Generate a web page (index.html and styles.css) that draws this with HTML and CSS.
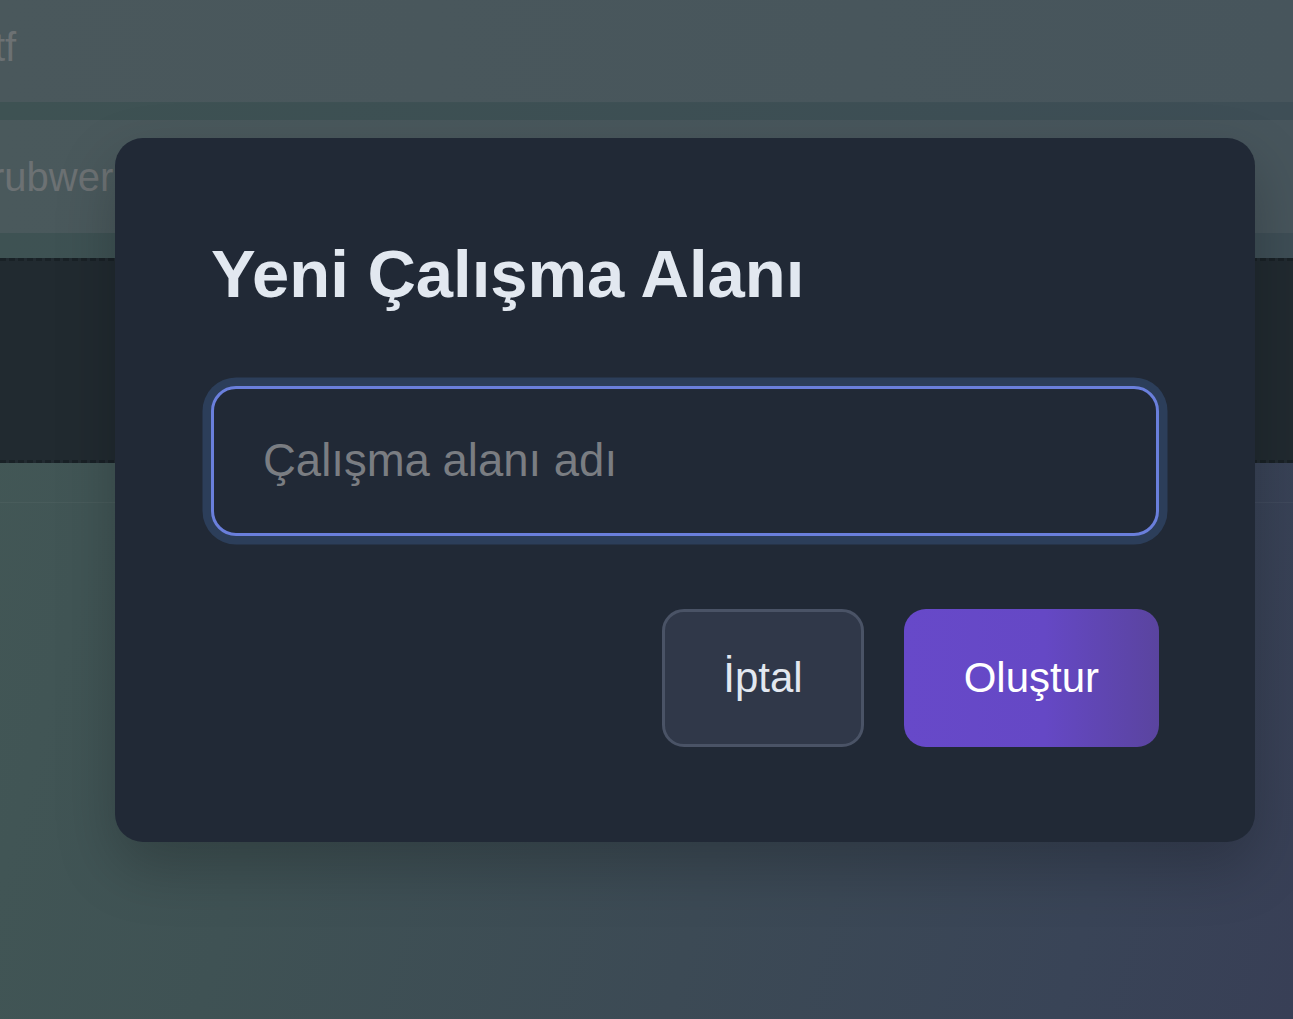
FILE: index.html
```html
<!DOCTYPE html>
<html lang="tr">
<head>
<meta charset="utf-8">
<title>Yeni Çalışma Alanı</title>
<link rel="stylesheet" href="styles.css">
</head>
<body>
<div class="page">
  <header class="topbar"><span class="topbar-text">tf</span></header>
  <div class="strip strip-thin"></div>
  <div class="card"><span class="card-text">rubwerk</span></div>
  <div class="strip strip-wide"></div>
  <div class="dropzone"></div>
  <div class="lower"></div>
</div>

<div class="modal">
  <h2 class="modal-title">Yeni Çalışma Alanı</h2>
  <input class="modal-input" type="text" placeholder="Çalışma alanı adı">
  <div class="modal-actions">
    <button class="btn btn-cancel" type="button">İptal</button>
    <button class="btn btn-create" type="button">Oluştur</button>
  </div>
</div>
</body>
</html>
```

FILE: styles.css
```css
html, body {
  margin: 0;
  padding: 0;
  height: 100%;
  overflow: hidden;
}

body {
  font-family: "Liberation Sans", Arial, sans-serif;
  background: linear-gradient(105deg, #435856 0%, #3f5254 30%, #3c4a55 60%, #394457 85%, #383f56 100%);
}

.page {
  min-height: 100vh;
  display: flex;
  flex-direction: column;
}

.topbar {
  height: 102px;
  box-sizing: border-box;
  padding-top: 24px;
  background: linear-gradient(90deg, #4a585c, #47555c);
  overflow: hidden;
  white-space: nowrap;
}

.topbar-text,
.card-text {
  display: block;
  font-size: 40px;
  line-height: 46px;
  color: #6c7173;
}

.topbar-text {
  margin-left: -6px;
}

.strip {
  background: linear-gradient(90deg, #3e5253, #3e4e56);
}

.strip-thin {
  height: 18px;
}

.strip-wide {
  height: 25px;
}

.card {
  height: 113px;
  box-sizing: border-box;
  padding-top: 34px;
  background: linear-gradient(90deg, #4a595c, #47555c);
  overflow: hidden;
  white-space: nowrap;
}

.card-text {
  margin-left: -9px;
}

.dropzone {
  height: 205px;
  box-sizing: border-box;
  background: #212a30;
  border-top: 3px dashed #192126;
  border-bottom: 3px dashed #192126;
}

.lower {
  height: 39px;
  border-bottom: 1px solid rgba(255, 255, 255, 0.04);
}

.modal {
  position: absolute;
  left: 115px;
  top: 138px;
  width: 1140px;
  height: 704px;
  box-sizing: border-box;
  padding: 97px 96px 95px;
  background: #212936;
  border-radius: 28px;
  box-shadow: 0 25px 60px rgba(0, 0, 0, 0.22);
  display: flex;
  flex-direction: column;
}

.modal-title {
  margin: 0;
  font-size: 67px;
  line-height: 77px;
  font-weight: 700;
  color: #e2e8f0;
}

.modal-input {
  margin-top: 74px;
  height: 150px;
  box-sizing: border-box;
  width: 100%;
  padding: 0 0 0 49px;
  font-family: "Liberation Sans", Arial, sans-serif;
  font-size: 45.5px;
  color: #e2e8f0;
  background: #212936;
  border: 3px solid #6a7fdc;
  border-radius: 25px;
  box-shadow: 0 0 0 8.5px #2c3e5a;
  outline: none;
}

.modal-input::placeholder {
  color: #7a7d82;
}

.modal-actions {
  margin-top: 73px;
  display: flex;
  justify-content: flex-end;
  gap: 40px;
}

.btn {
  height: 138px;
  box-sizing: border-box;
  font-family: "Liberation Sans", Arial, sans-serif;
  font-size: 42px;
  border-radius: 22px;
  cursor: pointer;
}

.btn-cancel {
  padding: 0 58px;
  background: #303849;
  border: 3px solid #4a5366;
  color: #e2e8f0;
}

.btn-create {
  padding: 0 60px;
  border: none;
  color: #ffffff;
  background: linear-gradient(90deg, #6749c9 0%, #6548c5 55%, #5a449f 100%);
}
```
